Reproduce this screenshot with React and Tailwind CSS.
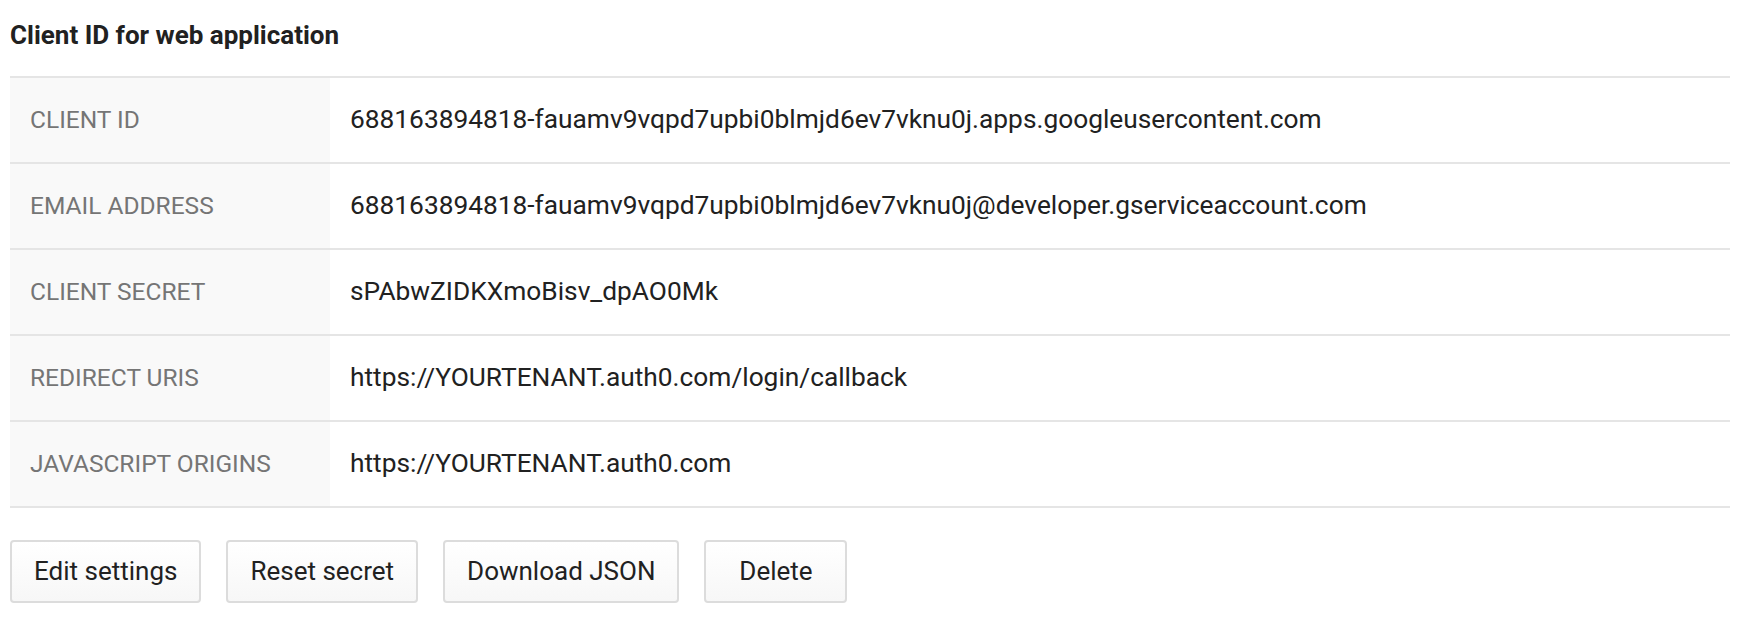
const rows = [
  { label: "Client ID", value: "688163894818-fauamv9vqpd7upbi0blmjd6ev7vknu0j.apps.googleusercontent.com" },
  { label: "Email address", value: "688163894818-fauamv9vqpd7upbi0blmjd6ev7vknu0j@developer.gserviceaccount.com" },
  { label: "Client secret", value: "sPAbwZIDKXmoBisv_dpAO0Mk" },
  { label: "Redirect URIs", value: "https://YOURTENANT.auth0.com/login/callback" },
  { label: "JavaScript origins", value: "https://YOURTENANT.auth0.com" },
];

const buttons = ["Edit settings", "Reset secret", "Download JSON", "Delete"];

export default function App() {
  return (
    <div className="min-h-screen bg-white pl-[10px] pr-[20px] pt-[20px] font-['Roboto',sans-serif] text-[#212121]">
      <h2 className="text-[26px] font-bold leading-[30px]">Client ID for web application</h2>

      <div className="mt-[26px] border-b-2 border-[#e5e5e5]">
        {rows.map((r) => (
          <div key={r.label} className="flex h-[86px] border-t-2 border-[#e5e5e5]">
            <div className="flex w-[320px] shrink-0 items-center bg-[#f9f9f9] px-[20px] text-[24.5px] uppercase text-[#757575]">
              {r.label}
            </div>
            <div className="flex items-center px-[20px] text-[26.3px]">{r.value}</div>
          </div>
        ))}
      </div>

      <div className="mt-[32px] flex gap-[25px]">
        {buttons.map((b) => (
          <button
            key={b}
            className="h-[63px] min-w-[143px] rounded-[4px] border-2 border-[#dcdcdc] bg-gradient-to-b from-white to-[#f7f7f7] px-[22px] text-[26px] text-[#212121]"
          >
            {b}
          </button>
        ))}
      </div>
    </div>
  );
}
